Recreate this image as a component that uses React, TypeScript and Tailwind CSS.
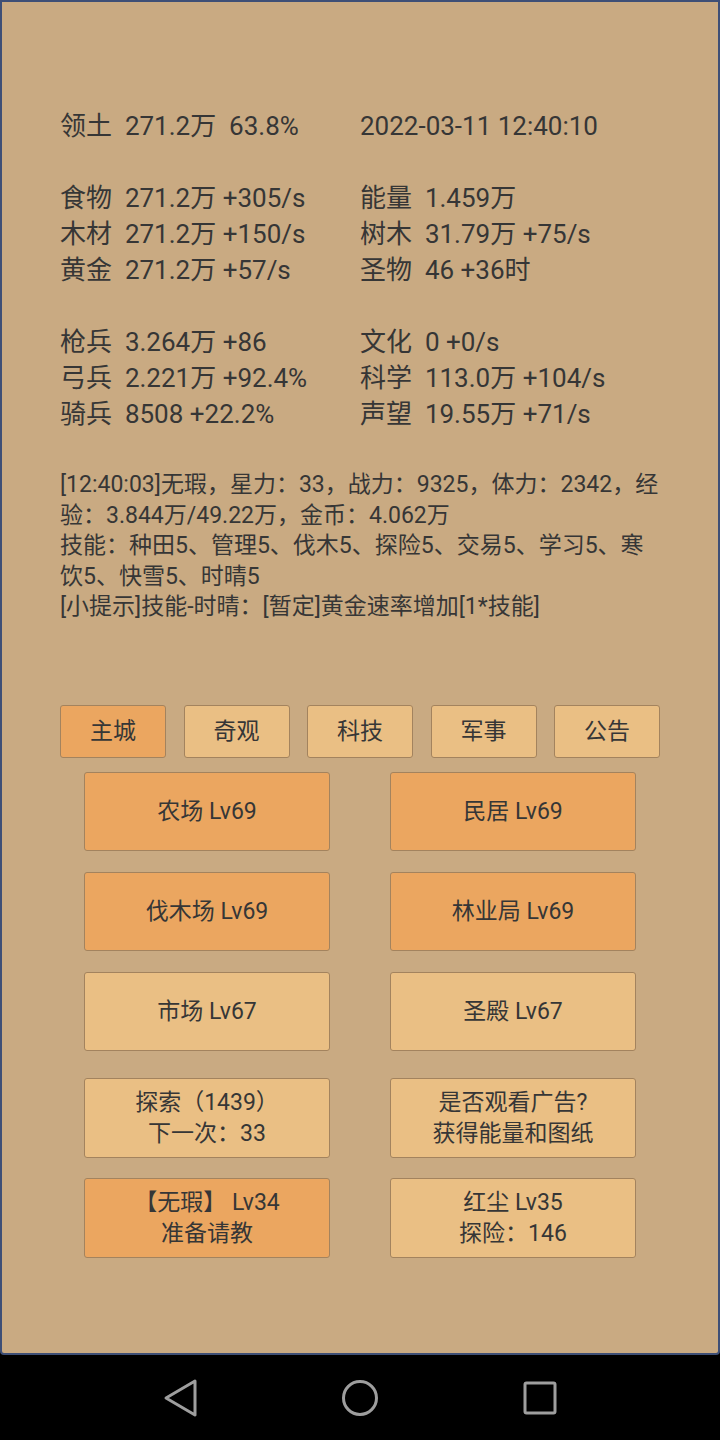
import React from 'react'

const left = [
  ['领土', '271.2万  63.8%'],
  null,
  ['食物', '271.2万 +305/s'],
  ['木材', '271.2万 +150/s'],
  ['黄金', '271.2万 +57/s'],
  null,
  ['枪兵', '3.264万 +86'],
  ['弓兵', '2.221万 +92.4%'],
  ['骑兵', '8508 +22.2%'],
]

const right = [
  ['2022-03-11 12:40:10', null],
  null,
  ['能量', '1.459万'],
  ['树木', '31.79万 +75/s'],
  ['圣物', '46 +36时'],
  null,
  ['文化', '0 +0/s'],
  ['科学', '113.0万 +104/s'],
  ['声望', '19.55万 +71/s'],
]

const logLines = [
  '[12:40:03]无瑕，星力：33，战力：9325，体力：2342，经',
  '验：3.844万/49.22万，金币：4.062万',
  '技能：种田5、管理5、伐木5、探险5、交易5、学习5、寒',
  '饮5、快雪5、时晴5',
  '[小提示]技能-时晴：[暂定]黄金速率增加[1*技能]',
]

const tabs = ['主城', '奇观', '科技', '军事', '公告']

function StatColumn({ rows }: { rows: any[] }) {
  return (
    <div className="flex flex-col">
      {rows.map((r: any, i: number) =>
        r === null ? (
          <div key={i} className="h-[36px]" />
        ) : (
          <div key={i} className="h-[36px] leading-[36px] whitespace-pre">
            {r[1] === null ? r[0] : `${r[0]}  ${r[1]}`}
          </div>
        )
      )}
    </div>
  )
}

function Btn({ children, active, className }: { children: React.ReactNode; active?: boolean; className?: string }) {
  return (
    <div
      className={
        'flex flex-col items-center justify-center border border-[#a3835e] rounded-[3px] text-[23px] leading-[31px] text-[#363636] ' +
        (active ? 'bg-[#eba660] ' : 'bg-[#eabf84] ') +
        (className || '')
      }
    >
      {children}
    </div>
  )
}

export default function App() {
  return (
    <div className="w-[720px] h-[1440px] flex flex-col bg-black font-[Roboto,'Noto_Sans_CJK_SC',sans-serif]">
      <div className="flex-1 flex flex-col bg-[#c9aa82] border-2 border-[#3e4f76] rounded-b-[4px] px-[58px] pt-[106px] text-[#363636]">
        <div className="grid grid-cols-2 text-[26px]">
          <StatColumn rows={left} />
          <StatColumn rows={right} />
        </div>

        <div className="mt-[38px] text-[23px] leading-[30.5px]">
          {logLines.map((l, i) => (
            <div key={i} className="whitespace-nowrap">{l}</div>
          ))}
        </div>

        <div className="mt-[82px] flex gap-[17.5px]">
          {tabs.map((t, i) => (
            <Btn key={t} active={i === 0} className="flex-1 h-[53px]">
              {t}
            </Btn>
          ))}
        </div>

        <div className="mt-[14px] w-[552px] mx-auto grid grid-cols-2 gap-x-[60px]">
          <Btn active className="h-[79px]">农场 Lv69</Btn>
          <Btn active className="h-[79px]">民居 Lv69</Btn>
          <Btn active className="h-[79px] mt-[21px]">伐木场 Lv69</Btn>
          <Btn active className="h-[79px] mt-[21px]">林业局 Lv69</Btn>
          <Btn className="h-[79px] mt-[21px]">市场 Lv67</Btn>
          <Btn className="h-[79px] mt-[21px]">圣殿 Lv67</Btn>
          <Btn className="h-[80px] mt-[27px]">
            <span>探索（1439）</span>
            <span>下一次：33</span>
          </Btn>
          <Btn className="h-[80px] mt-[27px]">
            <span>是否观看广告?</span>
            <span>获得能量和图纸</span>
          </Btn>
          <Btn active className="h-[80px] mt-[20px]">
            <span>【无瑕】 Lv34</span>
            <span>准备请教</span>
          </Btn>
          <Btn className="h-[80px] mt-[20px]">
            <span>红尘 Lv35</span>
            <span>探险：146</span>
          </Btn>
        </div>
      </div>

      <div className="h-[85px] flex items-center justify-center gap-[140px]">
        <svg width="40" height="40" viewBox="0 0 40 40" fill="none" stroke="#9e9e9e" strokeWidth="3" strokeLinejoin="round">
          <path d="M35 3 L6 20 L35 37 Z" />
        </svg>
        <svg width="40" height="40" viewBox="0 0 40 40" fill="none" stroke="#9e9e9e" strokeWidth="3">
          <circle cx="20" cy="20" r="16.5" />
        </svg>
        <svg width="40" height="40" viewBox="0 0 40 40" fill="none" stroke="#9e9e9e" strokeWidth="3">
          <rect x="5" y="5" width="30" height="30" rx="1.5" />
        </svg>
      </div>
    </div>
  )
}
